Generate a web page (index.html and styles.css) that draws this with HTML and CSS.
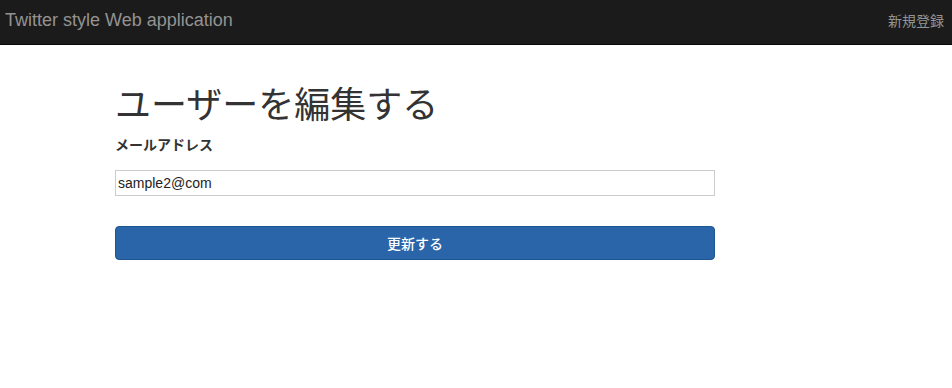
FILE: index.html
```html
<!DOCTYPE html>
<html lang="ja">
<head>
  <meta charset="UTF-8" />
  <title>Twitter style Web application</title>
  <link rel="stylesheet" href="styles.css">
</head>
<body>
  <div class="navbar">
    <a class="brand" href="#">Twitter style Web application</a>
    <a class="nav-link" href="#">新規登録</a>
  </div>
  <div class="container">
    <h1>ユーザーを編集する</h1>
    <form class="edit-form">
      <label for="email">メールアドレス</label>
      <input type="email" id="email" value="sample2@com">
      <button type="submit">更新する</button>
    </form>
  </div>
</body>
</html>
```

FILE: styles.css
```css
body {
  margin: 0;
  font-family: "Liberation Sans", "Noto Sans CJK JP", sans-serif;
  font-size: 14px;
  color: #333;
  background: #fff;
}
.navbar {
  height: 45px;
  background: #1b1b1b;
  border-bottom: 1px solid #080808;
  box-sizing: border-box;
  display: flex;
  align-items: center;
  justify-content: space-between;
  padding: 0 8px 4px 5px;
}
.navbar a {
  color: #939393;
  text-decoration: none;
}
.brand {
  font-size: 18px;
}
.nav-link {
  font-size: 14px;
}
.container {
  width: 600px;
  margin-left: 115px;
}
h1 {
  font-size: 36px;
  font-weight: 400;
  line-height: 40px;
  margin: 41px 0 9px;
  color: #333;
}
.edit-form {
  display: flex;
  flex-direction: column;
}
.edit-form label {
  font-weight: bold;
  line-height: 20px;
  margin-bottom: 15px;
}
.edit-form input {
  height: 26px;
  box-sizing: border-box;
  border: 1px solid #ccc;
  border-radius: 0;
  padding: 0 2px;
  font-family: "Liberation Sans", sans-serif;
  font-size: 14px;
  color: #222;
  margin: 0 0 30px;
}
.edit-form button {
  height: 34px;
  background: #2965a8;
  border: 1px solid #1f5592;
  border-radius: 4px;
  color: #fff;
  font-family: "Liberation Sans", "Noto Sans CJK JP", sans-serif;
  font-size: 14px;
  font-weight: 500;
}
```
